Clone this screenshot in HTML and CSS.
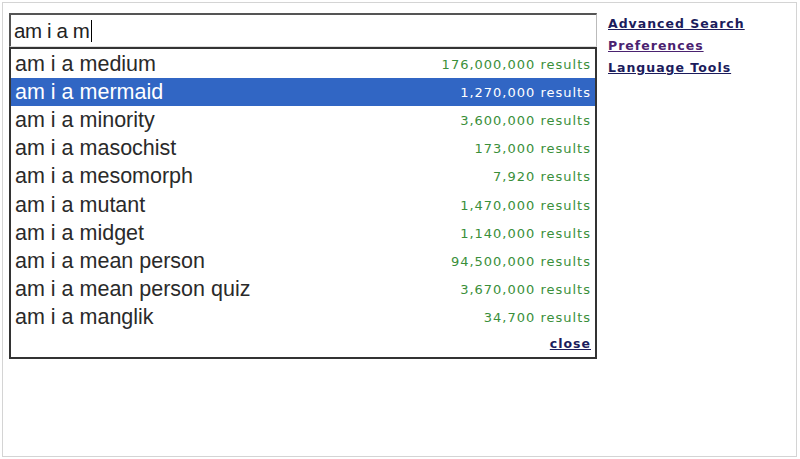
FILE: index.html
```html
<!DOCTYPE html>
<html lang="en">
<head>
    <meta charset="UTF-8">
    <meta name="viewport" content="width=device-width, initial-scale=1.0">
    <title>Google Suggest</title>
    <link rel="stylesheet" href="styles.css">
</head>
<body>
    <div class="frame">
        <div class="search">
            <div class="query">am i a m<span class="caret"></span></div>
            <div class="suggest">
                <div class="row"><span class="term">am i a medium</span><span class="count">176,000,000 results</span></div>
                <div class="row selected"><span class="term">am i a mermaid</span><span class="count">1,270,000 results</span></div>
                <div class="row"><span class="term">am i a minority</span><span class="count">3,600,000 results</span></div>
                <div class="row"><span class="term">am i a masochist</span><span class="count">173,000 results</span></div>
                <div class="row"><span class="term">am i a mesomorph</span><span class="count">7,920 results</span></div>
                <div class="row"><span class="term">am i a mutant</span><span class="count">1,470,000 results</span></div>
                <div class="row"><span class="term">am i a midget</span><span class="count">1,140,000 results</span></div>
                <div class="row"><span class="term">am i a mean person</span><span class="count">94,500,000 results</span></div>
                <div class="row"><span class="term">am i a mean person quiz</span><span class="count">3,670,000 results</span></div>
                <div class="row"><span class="term">am i a manglik</span><span class="count">34,700 results</span></div>
                <div class="close-row"><a href="#" class="close">close</a></div>
            </div>
        </div>
        <div class="links">
            <a href="#">Advanced Search</a>
            <a href="#" class="visited">Preferences</a>
            <a href="#">Language Tools</a>
        </div>
    </div>
</body>
</html>
```

FILE: styles.css
```css
body {
    margin: 0;
    background: #fff;
    font-family: "Liberation Sans", Arial, sans-serif;
}
.frame {
    margin: 2px;
    width: 795px;
    height: 455px;
    box-sizing: border-box;
    border: 1px solid #d4d4d4;
    padding: 10px 0 0 6px;
    display: flex;
    gap: 11px;
}
.search {
    width: 588px;
}
.query {
    height: 34px;
    box-sizing: border-box;
    border-top: 2px solid #555;
    border-left: 2px solid #555;
    border-right: 1px solid #bbb;
    border-bottom: 1px solid #ddd;
    padding: 0 0 0 3px;
    font-size: 20.5px;
    letter-spacing: -0.4px;
    line-height: 31px;
    color: #222;
    display: flex;
    align-items: center;
}
.caret {
    display: inline-block;
    width: 1px;
    height: 22px;
    background: #000;
    margin-left: 2px;
}
.suggest {
    height: 312px;
    box-sizing: border-box;
    border: 2px solid #333;
    padding-top: 1px;
}
.row {
    height: 28.2px;
    display: flex;
    align-items: center;
    justify-content: space-between;
    padding: 0 4px 0 4px;
}
.term {
    font-size: 21.5px;
    color: #2a2a2a;
}
.count {
    font-family: "DejaVu Sans", Verdana, sans-serif;
    font-size: 13px;
    letter-spacing: 1px;
    color: #3a8f3a;
}
.row.selected {
    background: #3166c4;
}
.row.selected .term,
.row.selected .count {
    color: #fff;
}
.close-row {
    height: 24px;
    display: flex;
    align-items: center;
    justify-content: flex-end;
    padding-right: 4px;
}
.close,
.links a {
    font-family: "DejaVu Sans", Verdana, sans-serif;
    font-size: 12.5px;
    font-weight: bold;
    letter-spacing: 1px;
    color: #1c1c5c;
}
.links {
    display: flex;
    flex-direction: column;
    align-items: flex-start;
    line-height: 22px;
}
.links a.visited {
    color: #4a2270;
}
```
